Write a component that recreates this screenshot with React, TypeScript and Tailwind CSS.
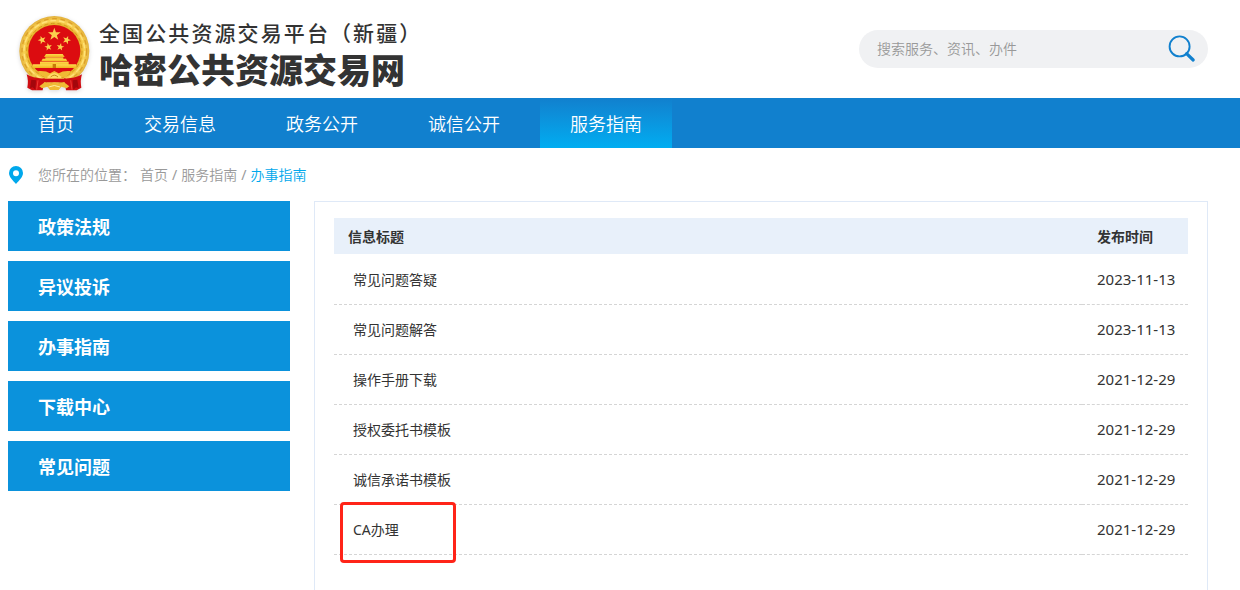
import { Fragment } from 'react';

const navItems = ['首页', '交易信息', '政务公开', '诚信公开', '服务指南'];
const activeNav = '服务指南';

const sideItems = ['政策法规', '异议投诉', '办事指南', '下载中心', '常见问题'];

const crumbs = ['首页', '服务指南', '办事指南'];

interface Article {
  title: string;
  date: string;
  marked?: boolean;
}

const articles: Article[] = [
  { title: '常见问题答疑', date: '2023-11-13' },
  { title: '常见问题解答', date: '2023-11-13' },
  { title: '操作手册下载', date: '2021-12-29' },
  { title: '授权委托书模板', date: '2021-12-29' },
  { title: '诚信承诺书模板', date: '2021-12-29' },
  { title: 'CA办理', date: '2021-12-29', marked: true },
];

const STAR = 'M0 -10 L2.4 -3.2 L9.5 -3.1 L3.8 1.2 L5.9 8.1 L0 4 L-5.9 8.1 L-3.8 1.2 L-9.5 -3.1 L-2.4 -3.2 Z';

function Emblem() {
  return (
    <svg viewBox="24 26 219 228" className="w-[73px] h-[76px] shrink-0 drop-shadow-sm" role="img" aria-label="国徽">
      <defs>
        <radialGradient id="gold" cx="50%" cy="50%" r="50%">
          <stop offset="72%" stopColor="#e0a41c" />
          <stop offset="86%" stopColor="#fad254" />
          <stop offset="100%" stopColor="#e2b03a" />
        </radialGradient>
        <linearGradient id="gate" x1="0" y1="0" x2="0" y2="1">
          <stop offset="0%" stopColor="#ffd94e" />
          <stop offset="100%" stopColor="#f0b41e" />
        </linearGradient>
      </defs>

      {/* Wreath */}
      <circle cx="133" cy="134" r="105" fill="url(#gold)" />
      <circle cx="133" cy="134" r="97" fill="none" stroke="#dca02a" strokeWidth="4" strokeDasharray="14 11" />
      <circle cx="133" cy="134" r="91" fill="none" stroke="#ffe27a" strokeWidth="4" strokeDasharray="17 9" />
      <circle cx="133" cy="134" r="83" fill="none" stroke="#d39a1c" strokeWidth="3" strokeDasharray="12 8" />

      {/* Red field */}
      <circle cx="133" cy="134" r="78" fill="#dc0c10" />

      {/* Stars */}
      <g fill="#fbd04e">
        <path d={STAR} transform="translate(133 84) scale(2)" />
        <path d={STAR} transform="translate(96 101) rotate(-20) scale(1.3)" />
        <path d={STAR} transform="translate(170 101) rotate(20) scale(1.3)" />
        <path d={STAR} transform="translate(115 122) rotate(-10) scale(1.2)" />
        <path d={STAR} transform="translate(151 122) rotate(10) scale(1.2)" />
      </g>

      {/* Gate tower */}
      <g fill="url(#gate)">
        <path d="M108 143 H158 L164 152 H102 Z" />
        <path d="M106 153 H160 V159 H106 Z" />
        <path d="M98 157 H168 L172 165 H94 Z" />
        <path d="M90 166 H176 V178 H90 Z" />
        <path d="M68 174 H198 V185 H68 Z" />
      </g>
      <path d="M128 173 H138 V185 H128 Z" fill="#c87a08" />

      {/* Ribbons */}
      <path d="M50 204 Q72 218 104 216 L98 252 H66 L52 244 Q56 222 50 204 Z" fill="#cf0d12" />
      <path d="M216 204 Q194 218 162 216 L168 252 H200 L214 244 Q210 222 216 204 Z" fill="#cf0d12" />
      <path d="M64 220 L60 246 L68 243 L76 250 L78 222 Z M202 220 L206 246 L198 243 L190 250 L188 222 Z" fill="#a3070c" />
      <path d="M84 222 L80 250 M182 222 L186 250" stroke="#ee3a34" strokeWidth="3" />

      {/* Gear and sheaves */}
      <path d="M84 194 Q108 192 120 201 L133 194 L146 201 Q158 192 182 194 L174 207 Q160 216 133 214 Q106 216 92 207 Z" fill="#f0bb34" />
      <path d="M114 210 Q133 190 152 210 L156 217 H110 Z" fill="#ffdb66" />
      <path d="M122 212 Q133 201 144 212" fill="none" stroke="#c68a16" strokeWidth="3" />
      <path d="M100 217 H166 L168 228 H98 Z" fill="#cf0d12" />
      <path d="M88 240 L104 228 L120 233 L133 228 L146 233 L162 228 L178 240 L170 246 L154 241 L146 251 H120 L112 241 L96 246 Z" fill="#f0bb34" />
      <path d="M116 242 Q133 233 150 242" fill="none" stroke="#fff0a0" strokeWidth="3" />
    </svg>
  );
}

function SearchIcon() {
  return (
    <svg viewBox="0 0 28 28" className="w-7 h-7" fill="none" stroke="#1180ce" aria-hidden="true">
      <circle cx="11.6" cy="11.4" r="10" strokeWidth="1.9" />
      <path d="M18.6 18.6 L25.2 25" strokeWidth="3.2" strokeLinecap="round" />
    </svg>
  );
}

function PinIcon() {
  return (
    <svg viewBox="0 0 14 18" className="w-[14px] h-[18px] shrink-0" aria-hidden="true">
      <path
        fill="#00a8ec"
        fillRule="evenodd"
        d="M7 0 A7 7 0 0 1 14 7 C14 11 10.5 14 7 18 C3.5 14 0 11 0 7 A7 7 0 0 1 7 0 Z M7 4.3 A3 3 0 1 0 7 10.3 A3 3 0 1 0 7 4.3 Z"
      />
    </svg>
  );
}

export default function App() {
  return (
    <div className="min-h-screen flex flex-col bg-white text-sm text-[#333] font-[350] font-['Noto_Sans','Noto_Sans_CJK_SC',sans-serif]">
      {/* Header */}
      <header className="h-[98px] flex items-center justify-between pl-[18px] pr-8">
        <div className="flex items-center gap-2 pt-2">
          <Emblem />
          <div className="pt-0.5 whitespace-nowrap">
            <p className="text-[21px] leading-8 font-medium tracking-widest">全国公共资源交易平台（新疆）</p>
            <h1 className="text-[34px] leading-[42px] font-black">哈密公共资源交易网</h1>
          </div>
        </div>
        <form className="w-[349px] h-[38px] flex items-center rounded-full bg-[#f0f1f3] pl-[18px] pr-3" onSubmit={(e) => e.preventDefault()}>
          <input
            type="text"
            aria-label="搜索"
            placeholder="搜索服务、资讯、办件"
            className="flex-1 min-w-0 bg-transparent outline-none placeholder:text-[#999]"
          />
          <button type="submit" aria-label="搜索" className="cursor-pointer">
            <SearchIcon />
          </button>
        </form>
      </header>

      {/* Main nav */}
      <nav className="h-[50px] bg-[#1180ce] px-2 flex gap-[10px]">
        {navItems.map((item) => (
          <a
            key={item}
            href="#"
            className={
              item === activeNav
                ? 'px-[30px] text-lg leading-[52px] text-white bg-linear-to-b from-[#1180ce] to-[#00adf1]'
                : 'px-[30px] text-lg leading-[52px] text-white'
            }
          >
            {item}
          </a>
        ))}
      </nav>

      {/* Breadcrumb */}
      <div className="h-[53px] flex items-center px-[9px] text-[#999]">
        <PinIcon />
        <span className="pl-[15px] pr-1">您所在的位置：</span>
        {crumbs.map((crumb, i) => (
          <Fragment key={crumb}>
            {i > 0 && <span className="px-1 font-normal">/</span>}
            <a href="#" className={i === crumbs.length - 1 ? 'text-[#00a8ec]' : ''}>
              {crumb}
            </a>
          </Fragment>
        ))}
      </div>

      <div className="flex-1 flex gap-6 pl-2 pr-8">
        {/* Sidebar */}
        <aside className="w-[282px] shrink-0 flex flex-col gap-[10px]">
          {sideItems.map((item) => (
            <a key={item} href="#" className="h-[50px] pl-[30px] bg-[#0b92dc] text-lg leading-[52px] font-bold text-white">
              {item}
            </a>
          ))}
        </aside>

        {/* Article list */}
        <main className="flex-1 min-w-0 border border-b-0 border-[#dfe9f7] px-[19px] pt-4">
          <table className="w-full border-separate border-spacing-0 text-left font-normal">
            <thead>
              <tr className="h-[37px]">
                <th className="bg-[#e8f0fa] border-b border-white pt-0.5 pl-[14px] font-bold">信息标题</th>
                <th className="w-[106px] bg-[#e8f0fa] border-b border-white pt-0.5 pl-[15px] font-bold">发布时间</th>
              </tr>
            </thead>
            <tbody>
              {articles.map((article) => (
                <tr key={article.title} className="h-[50px]">
                  <td className="relative border-b border-dashed border-[#d5d5d5] pl-[19px]">
                    <a href="#">{article.title}</a>
                    {article.marked && (
                      <span className="absolute left-[6px] -top-[3px] w-[116px] h-[61px] rounded-sm border-3 border-[#ff2418] pointer-events-none" />
                    )}
                  </td>
                  <td className="border-b border-dashed border-[#d5d5d5] pl-[15px] text-[15px]">{article.date}</td>
                </tr>
              ))}
            </tbody>
          </table>
        </main>
      </div>
    </div>
  );
}
